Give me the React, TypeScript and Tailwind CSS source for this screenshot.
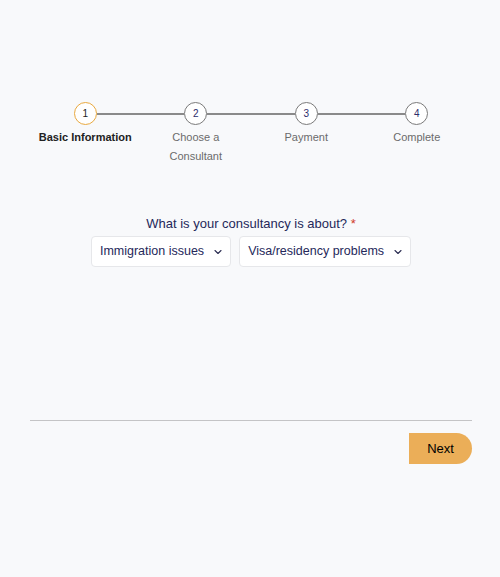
const steps = [
  { n: 1, label: "Basic Information", active: true },
  { n: 2, label: "Choose a Consultant", active: false },
  { n: 3, label: "Payment", active: false },
  { n: 4, label: "Complete", active: false },
];

function Chevron() {
  return (
    <svg width="8" height="8" viewBox="0 0 8 8" fill="none" className="shrink-0">
      <path d="M1 2.5 4 5.5 7 2.5" stroke="#2b2d52" strokeWidth="1.1" strokeLinecap="round" strokeLinejoin="round" />
    </svg>
  );
}

function Stepper() {
  return (
    <div className="grid grid-cols-4">
      {steps.map((step, i) => (
        <div key={step.n} className="flex flex-col items-center">
          <div className="flex w-full items-center">
            <div className={`h-[2px] flex-1 ${i === 0 ? "bg-transparent" : "bg-[#8a8a8a]"}`} />
            <div
              className={`flex h-[23px] w-[23px] items-center justify-center rounded-full border-[1.5px] bg-white text-[10px] ${
                step.active ? "border-[#e9a93f] text-[#222]" : "border-[#7a7a7a] text-[#2d2d6b]"
              }`}
            >
              {step.n}
            </div>
            <div className={`h-[2px] flex-1 ${i === steps.length - 1 ? "bg-transparent" : "bg-[#8a8a8a]"}`} />
          </div>
          <p
            className={`mt-[3px] px-[6px] text-center text-[11px] leading-[19px] ${
              step.active ? "font-bold text-[#222]" : "text-[#6b6b6b]"
            }`}
          >
            {step.label}
          </p>
        </div>
      ))}
    </div>
  );
}

export default function App() {
  return (
    <div className="min-h-screen bg-[#f8f9fb] pl-[30px] pr-[28px] pt-[102px] font-['Liberation_Sans',Arial,sans-serif]">
      <Stepper />

      <div className="mt-[49px] flex flex-col items-center">
        <p className="text-[13px] leading-[18px] text-[#25285a]">
          What is your consultancy is about? <span className="text-[#d0392b]">*</span>
        </p>
        <div className="mt-[3px] flex gap-[8px]">
          {["Immigration issues", "Visa/residency problems"].map((opt) => (
            <button
              key={opt}
              className="flex h-[31px] items-center gap-[10px] rounded-[4px] border border-[#e6e7ea] bg-white pl-[8px] pr-[8px] text-[12.5px] text-[#25285a]"
            >
              {opt}
              <Chevron />
            </button>
          ))}
        </div>
      </div>

      <div className="mt-[153px] h-px bg-[#c4c4c6]" />

      <div className="mt-[12px] flex justify-end">
        <button className="h-[31px] w-[63px] rounded-l-[3px] rounded-r-full bg-[#ebae58] text-[13px] text-black">
          Next
        </button>
      </div>
    </div>
  );
}
